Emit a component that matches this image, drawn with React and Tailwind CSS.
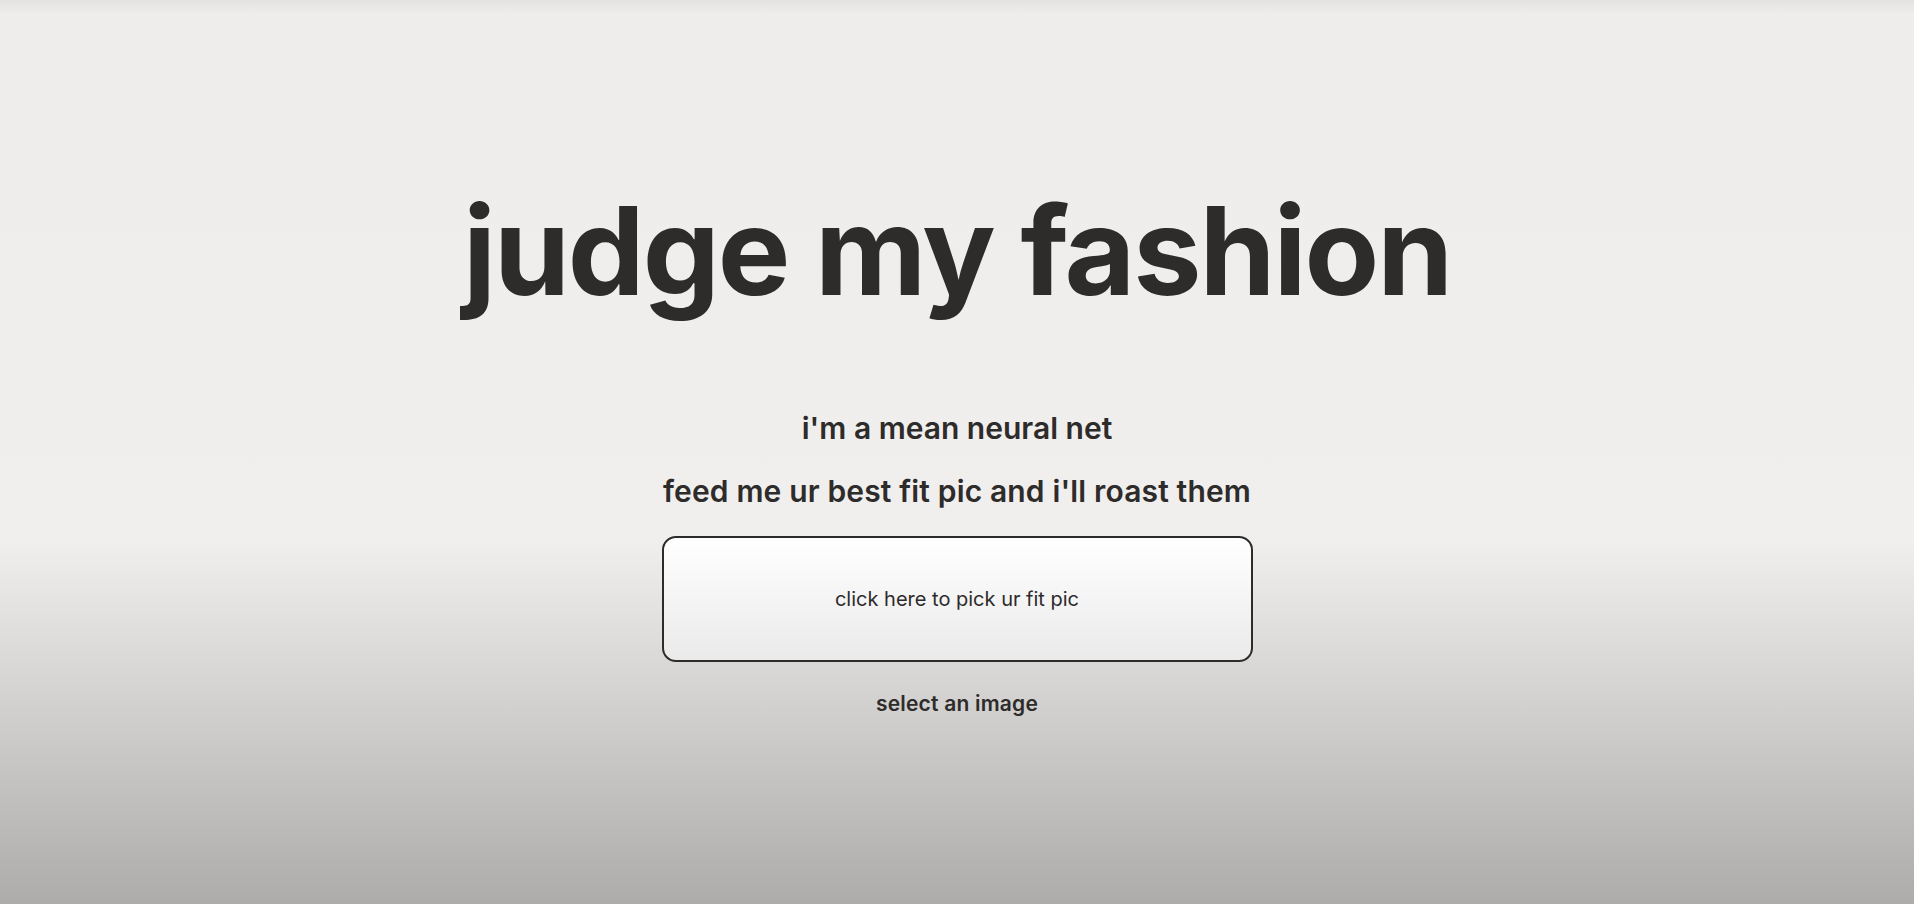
export default function App() {
  return (
    <div
      className="min-h-screen w-full flex flex-col items-center text-[#2e2b2b] bg-[linear-gradient(to_bottom,#e3e2e1_0px,#eeedec_14px,#f0efee_540px,#adacab_904px)]"
      style={{ fontFamily: "Inter, 'Noto Sans', sans-serif" }}
    >
      <h1 className="mt-[190px] text-[122px] leading-none font-bold tracking-[-0.017em]">
        judge my fashion
      </h1>
      <p className="mt-[98px] text-[30px] leading-[36px] font-semibold">
        i'm a mean neural net
      </p>
      <p className="mt-[27px] text-[30px] leading-[36px] font-semibold tracking-[0.005em]">
        feed me ur best fit pic and i'll roast them
      </p>
      <button className="mt-[27px] w-[591px] h-[126px] rounded-[14px] border-2 border-[#2e2b2b] bg-[linear-gradient(to_bottom,#ffffff,#ebeaea)] flex items-center justify-center text-[20px] text-[#2e2b2b] font-normal">
        click here to pick ur fit pic
      </button>
      <p className="mt-[28px] text-[21px] leading-[28px] font-semibold tracking-[0.01em]">
        select an image
      </p>
    </div>
  );
}
